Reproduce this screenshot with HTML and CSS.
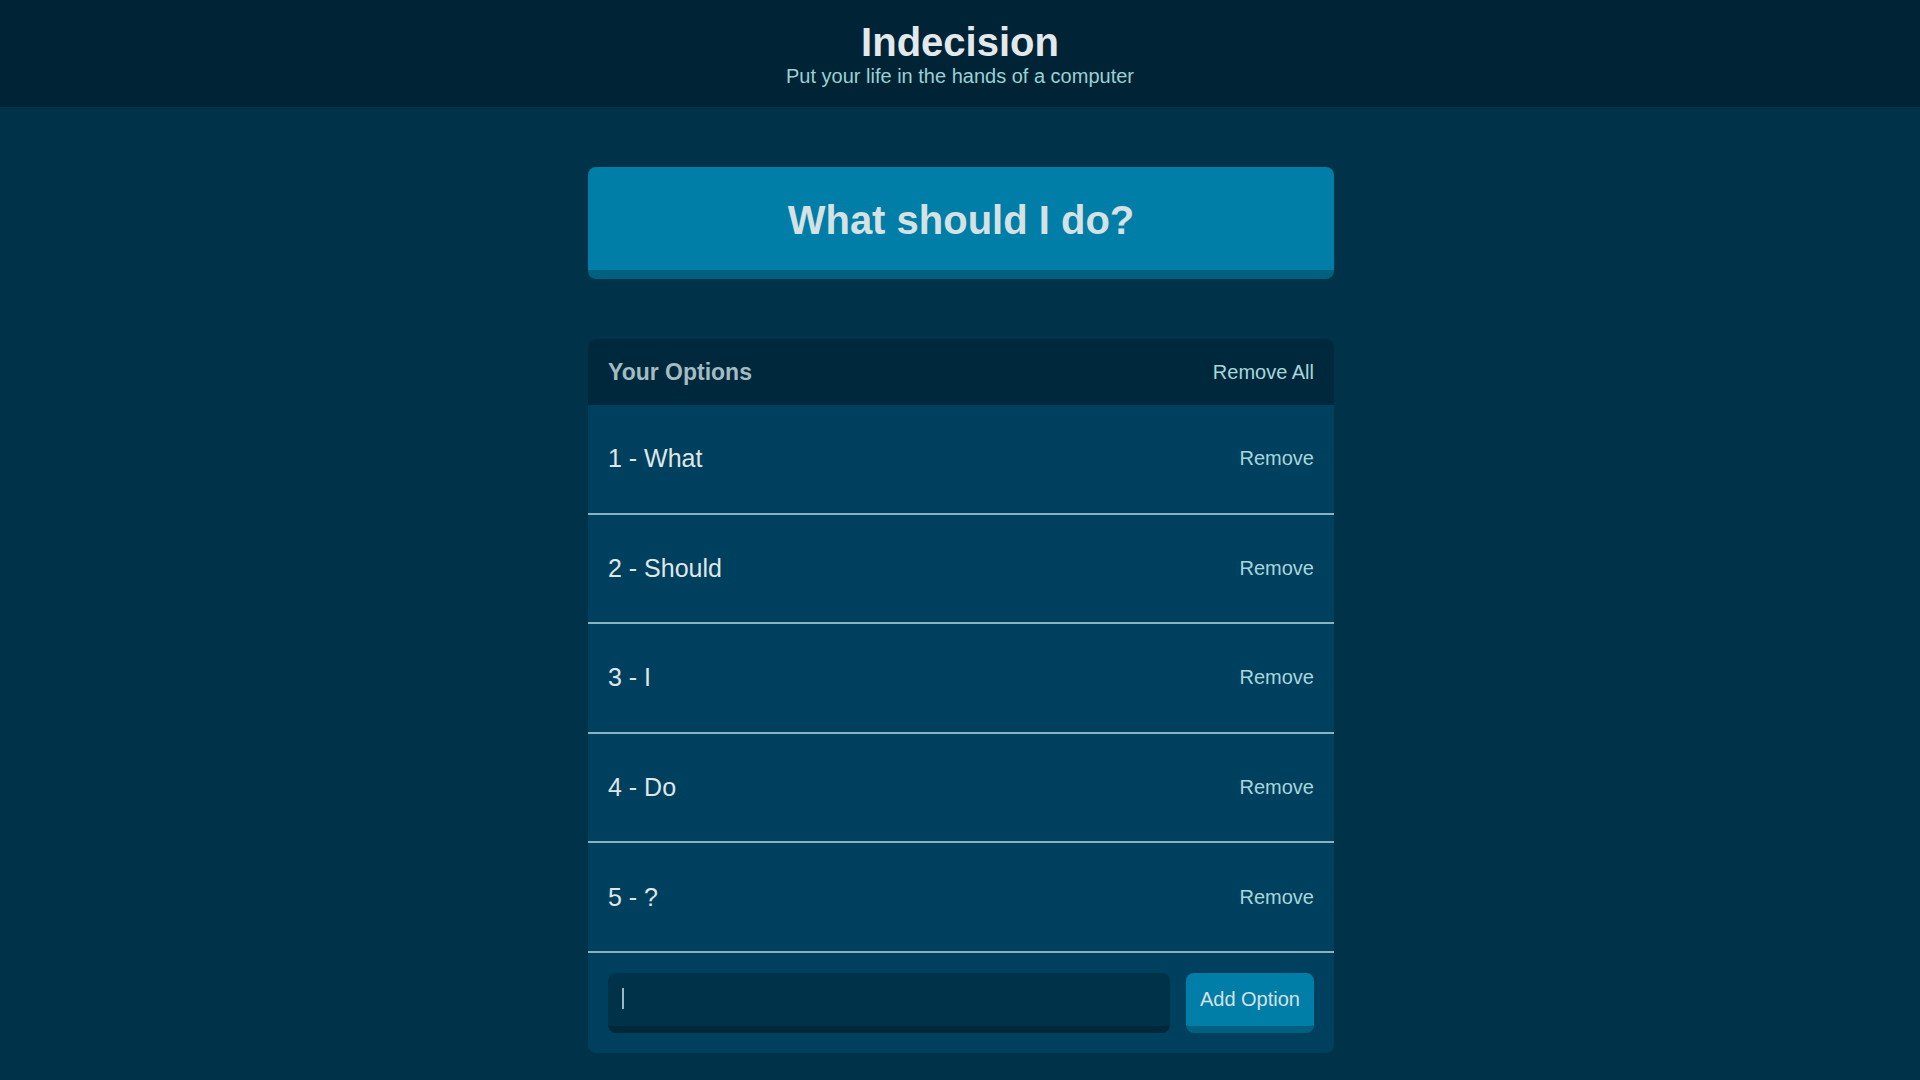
FILE: index.html
```html
<!DOCTYPE html>
<html lang="en">
<head>
<meta charset="utf-8">
<title>Indecision</title>
<link rel="stylesheet" href="styles.css">
</head>
<body>
<header class="header">
  <h1 class="header__title">Indecision</h1>
  <h2 class="header__subtitle">Put your life in the hands of a computer</h2>
</header>
<main class="container">
  <button class="big-button">What should I do?</button>
  <section class="widget">
    <div class="widget-header">
      <h3 class="widget-header__title">Your Options</h3>
      <button class="button-link">Remove All</button>
    </div>
    <div class="option">
      <p class="option__text">1 - What</p>
      <button class="button-link">Remove</button>
    </div>
    <div class="option">
      <p class="option__text">2 - Should</p>
      <button class="button-link">Remove</button>
    </div>
    <div class="option">
      <p class="option__text">3 - I</p>
      <button class="button-link">Remove</button>
    </div>
    <div class="option">
      <p class="option__text">4 - Do</p>
      <button class="button-link">Remove</button>
    </div>
    <div class="option">
      <p class="option__text">5 - ?</p>
      <button class="button-link">Remove</button>
    </div>
    <form class="add-option">
      <div class="add-option__input"><span class="caret"></span></div>
      <button type="button" class="button">Add Option</button>
    </form>
  </section>
</main>
</body>
</html>
```
FILE: styles.css
```css
* { box-sizing: border-box; }
html, body { margin: 0; padding: 0; }
body {
  background: #003249;
  font-family: "Liberation Sans", Arial, sans-serif;
  color: #dde5e7;
  min-height: 1080px;
}
.header {
  background: #002335;
  height: 107px;
  padding-top: 20px;
  text-align: center;
}
.header__title {
  margin: 0;
  font-size: 40px;
  font-weight: bold;
  line-height: normal;
  color: #e2e9eb;
}
.header__subtitle {
  margin: 0;
  font-size: 20px;
  font-weight: normal;
  line-height: normal;
  color: #9ad1d4;
}
.container {
  width: 746px;
  margin-left: calc(50% - 372px);
  padding-top: 60px;
}
.big-button {
  display: block;
  width: 100%;
  height: 112px;
  background: #007ea7;
  border: none;
  border-bottom: 9px solid #00607f;
  border-radius: 8px;
  color: #d5e1e3;
  font-family: inherit;
  font-size: 40px;
  font-weight: bold;
  padding: 4px 0 0;
  margin: 0 0 60px;
}
.widget {
  background: #00405f;
  border-radius: 8px;
  overflow: hidden;
}
.widget-header {
  background: #00283d;
  height: 66px;
  padding: 0 20px;
  display: flex;
  align-items: center;
  justify-content: space-between;
}
.widget-header__title {
  margin: 0;
  font-size: 23px;
  font-weight: bold;
  color: #a3bcc2;
}
.button-link {
  background: none;
  border: none;
  padding: 0;
  font-family: inherit;
  font-size: 20px;
  color: #a8d6da;
}
.option {
  height: 109.6px;
  padding: 0 20px;
  display: flex;
  align-items: center;
  justify-content: space-between;
  border-bottom: 2px solid #8ab2c0;
}
.option__text {
  margin: 0;
  font-size: 25px;
  color: #dfe7e9;
}
.add-option {
  display: flex;
  gap: 16px;
  padding: 20px;
  margin: 0;
}
.add-option__input {
  flex: 1;
  height: 60px;
  background: #003249;
  border-bottom: 7px solid #00273a;
  border-radius: 8px;
  padding: 15px 0 0 14px;
}
.caret {
  display: block;
  width: 2px;
  height: 21px;
  background: #9ab8c2;
}
.button {
  height: 60px;
  background: #007ea7;
  border: none;
  border-bottom: 7px solid #00607f;
  border-radius: 8px;
  padding: 0 14px;
  font-family: inherit;
  font-size: 20px;
  color: #d5e1e3;
}
```
